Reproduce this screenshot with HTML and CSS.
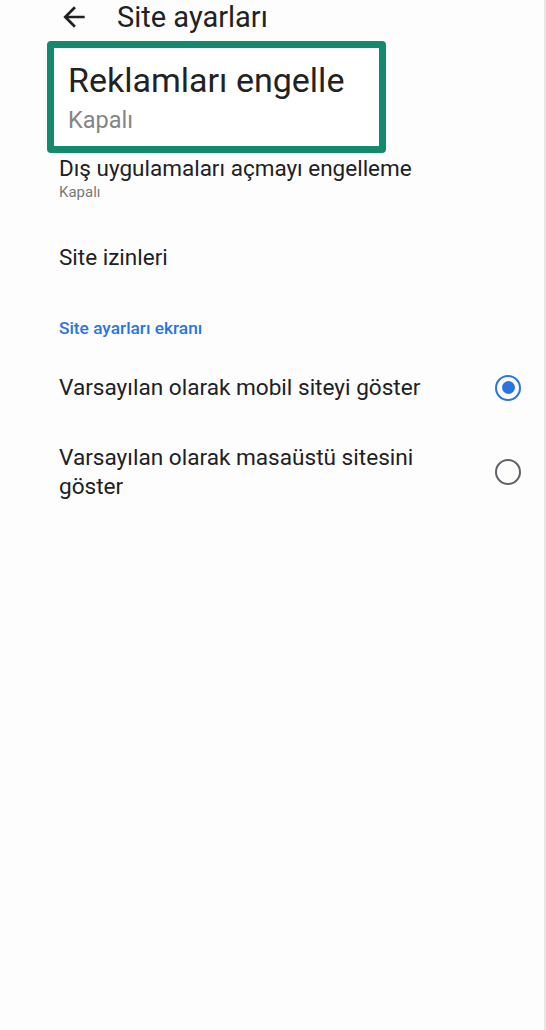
FILE: index.html
```html
<!DOCTYPE html>
<html lang="tr">
<head>
<meta charset="utf-8">
<link rel="stylesheet" href="styles.css">
</head>
<body>
<div class="screen">
  <header class="toolbar">
    <svg class="back" width="32" height="32" viewBox="0 0 24 24"><path d="M20 11H7.83l5.59-5.59L12 4l-8 8 8 8 1.41-1.41L7.83 13H20v-2z" fill="#202124"/></svg>
    <span class="title">Site ayarları</span>
  </header>
  <div class="highlight">
    <div class="hl-title">Reklamları engelle</div>
    <div class="hl-sub">Kapalı</div>
  </div>
  <div class="item first">
    <div class="item-title">Dış uygulamaları açmayı engelleme</div>
    <div class="item-sub">Kapalı</div>
  </div>
  <div class="item single">
    <div class="item-title">Site izinleri</div>
  </div>
  <div class="section">Site ayarları ekranı</div>
  <div class="radio-row r1">
    <div class="radio-label">Varsayılan olarak mobil siteyi göster</div>
    <span class="radio checked"></span>
  </div>
  <div class="radio-row r2">
    <div class="radio-label">Varsayılan olarak masaüstü sitesini göster</div>
    <span class="radio"></span>
  </div>
</div>
</body>
</html>
```

FILE: styles.css
```css
html, body {
  margin: 0;
  padding: 0;
  background: #fdfdfd;
}
body {
  font-family: Roboto, "Noto Sans", sans-serif;
  color: #202124;
}
.screen {
  width: 544px;
  height: 1030px;
  border-right: 2px solid #e6e6e6;
  overflow: hidden;
}
.toolbar {
  display: flex;
  align-items: center;
  height: 34px;
  padding-left: 58px;
}
.back {
  flex: none;
}
.title {
  margin-left: 27px;
  font-size: 29px;
  line-height: 34px;
}
.highlight {
  margin-left: 47px;
  margin-top: 7px;
  width: 311px;
  height: 98px;
  border: 7px solid #138a6d;
  border-radius: 4px;
  background: #fff;
  padding: 0 0 0 14px;
}
.hl-title {
  font-size: 34px;
  line-height: 40px;
  margin-top: 12px;
  color: #222;
  white-space: nowrap;
}
.hl-sub {
  font-size: 23.5px;
  line-height: 28px;
  margin-top: 6px;
  color: #858585;
}
.item {
  padding-left: 59px;
}
.item-title {
  font-size: 22.5px;
  line-height: 30px;
}
.item-sub {
  font-size: 15px;
  line-height: 18px;
  color: #7a7a7a;
}
.item.single {
  margin-top: 41px;
}
.section {
  margin-top: 46px;
  padding-left: 59px;
  font-size: 17.3px;
  font-weight: 500;
  line-height: 20px;
  color: #2a73e2;
}
.radio-row {
  display: flex;
  align-items: center;
  justify-content: space-between;
  padding-left: 59px;
  padding-right: 23px;
}
.r1 {
  margin-top: 35px;
}
.r2 {
  margin-top: 41px;
}
.radio-label {
  font-size: 22.6px;
  line-height: 29px;
  width: 400px;
}
.radio {
  flex: none;
  width: 26px;
  height: 26px;
  box-sizing: border-box;
  border: 2.5px solid #5f6368;
  border-radius: 50%;
  display: flex;
  align-items: center;
  justify-content: center;
}
.radio.checked {
  border-color: #2a73e2;
}
.radio.checked::after {
  content: "";
  width: 13px;
  height: 13px;
  border-radius: 50%;
  background: #2a73e2;
}
```
